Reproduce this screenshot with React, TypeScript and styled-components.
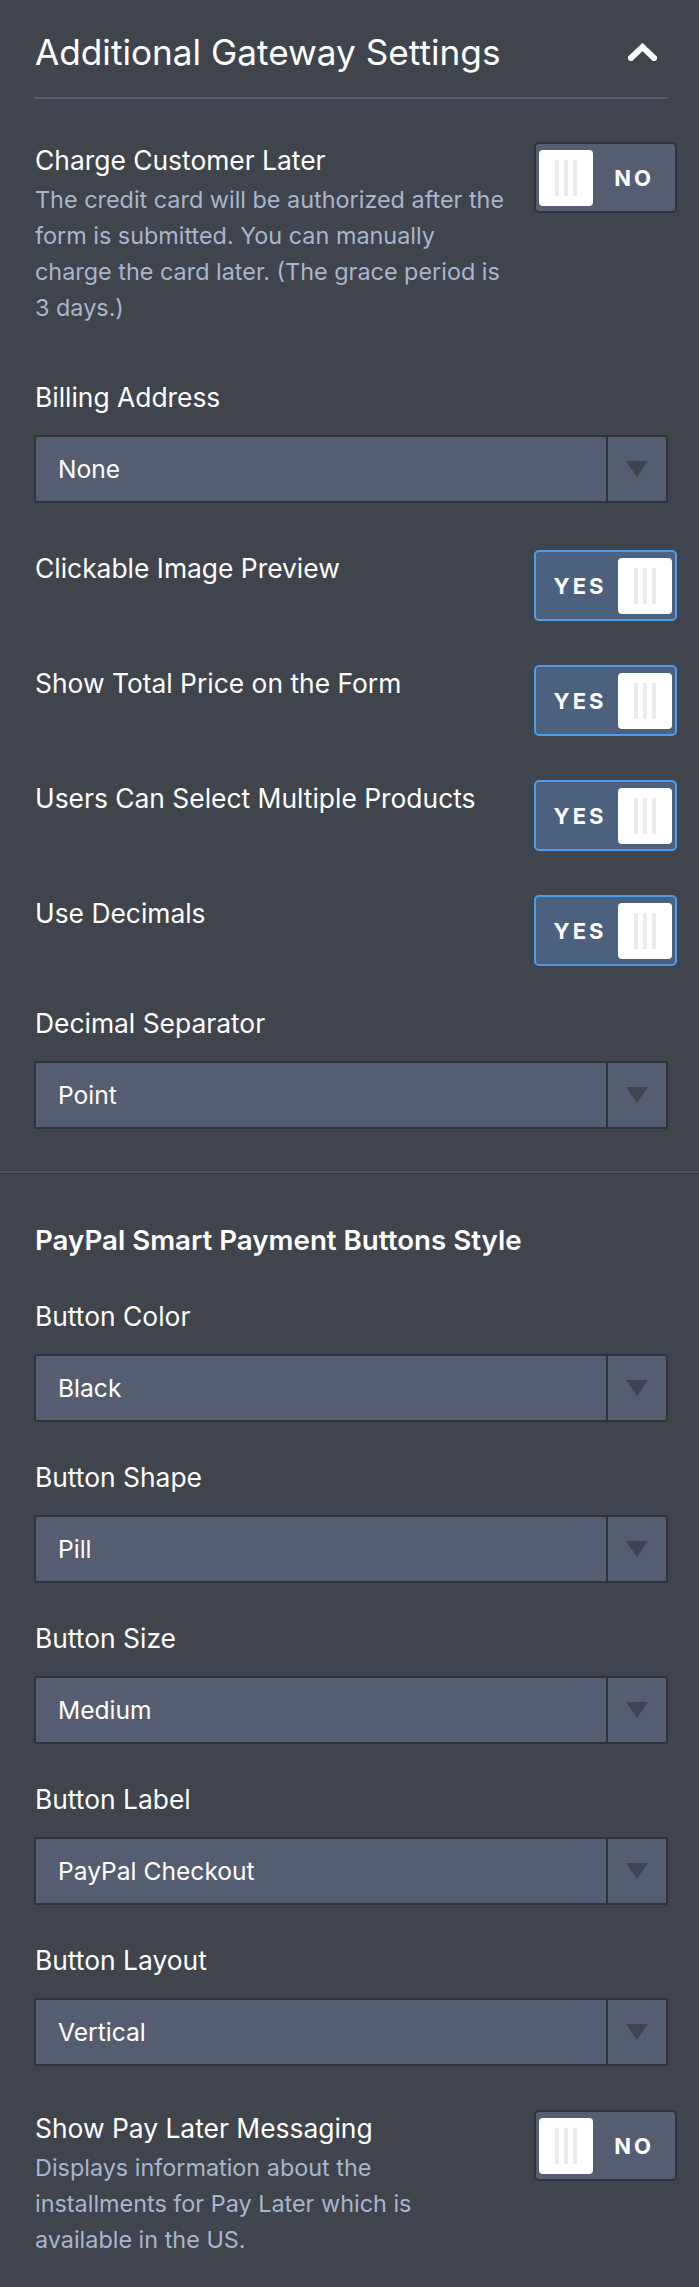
import React from 'react';
import styled, { createGlobalStyle, css } from 'styled-components';

type ToggleProps = {
  on: boolean;
};

type SelectProps = {
  value: string;
};

const GlobalStyle = createGlobalStyle`
  html,
  body {
    margin: 0;
    padding: 0;
    background-color: #3f444d;
  }

  body {
    font-family: Inter, 'Noto Sans', 'Liberation Sans', sans-serif;
    color: #fff;
    -webkit-font-smoothing: antialiased;
  }

  * {
    box-sizing: border-box;
  }
`;

function Toggle({ on }: ToggleProps) {
  const knob = (
    <Knob>
      <Grip />
      <Grip />
      <Grip />
    </Knob>
  );

  return (
    <ToggleBox $on={on}>
      {on ? null : knob}
      <ToggleText>{on ? 'YES' : 'NO'}</ToggleText>
      {on ? knob : null}
    </ToggleBox>
  );
}

function Select({ value }: SelectProps) {
  return (
    <SelectBox>
      <SelectValue>{value}</SelectValue>
      <ArrowCell>
        <Arrow />
      </ArrowCell>
    </SelectBox>
  );
}

function App() {
  return (
    <>
      <GlobalStyle />
      <Page>
        <Section>
          <Header>
            <Title>Additional Gateway Settings</Title>
            <Chevron width="29" height="18" viewBox="0 0 29 18">
              <polyline points="3,15 14.5,4 26,15" />
            </Chevron>
          </Header>

          <ToggleRow $gap={43}>
            <TextCol>
              <Label>Charge Customer Later</Label>
              <Description>
                The credit card will be authorized after the
                <br />
                form is submitted. You can manually
                <br />
                charge the card later. (The grace period is
                <br />
                3 days.)
              </Description>
            </TextCol>
            <Toggle on={false} />
          </ToggleRow>

          <Field $gap={53}>
            <Label>Billing Address</Label>
            <Select value="None" />
          </Field>

          <ToggleRow $gap={47}>
            <TextCol>
              <Label>Clickable Image Preview</Label>
            </TextCol>
            <Toggle on />
          </ToggleRow>

          <ToggleRow $gap={44}>
            <TextCol>
              <Label>Show Total Price on the Form</Label>
            </TextCol>
            <Toggle on />
          </ToggleRow>

          <ToggleRow $gap={44}>
            <TextCol>
              <Label>Users Can Select Multiple Products</Label>
            </TextCol>
            <Toggle on />
          </ToggleRow>

          <ToggleRow $gap={44}>
            <TextCol>
              <Label>Use Decimals</Label>
            </TextCol>
            <Toggle on />
          </ToggleRow>

          <Field $gap={39}>
            <Label>Decimal Separator</Label>
            <Select value="Point" />
          </Field>
        </Section>

        <Divider />

        <Section $bottom>
          <Heading>PayPal Smart Payment Buttons Style</Heading>

          <Field $gap={40}>
            <Label>Button Color</Label>
            <Select value="Black" />
          </Field>

          <Field $gap={37}>
            <Label>Button Shape</Label>
            <Select value="Pill" />
          </Field>

          <Field $gap={37}>
            <Label>Button Size</Label>
            <Select value="Medium" />
          </Field>

          <Field $gap={37}>
            <Label>Button Label</Label>
            <Select value="PayPal Checkout" />
          </Field>

          <Field $gap={37}>
            <Label>Button Layout</Label>
            <Select value="Vertical" />
          </Field>

          <ToggleRow $gap={44}>
            <TextCol>
              <Label>Show Pay Later Messaging</Label>
              <Description>
                Displays information about the
                <br />
                installments for Pay Later which is
                <br />
                available in the US.
              </Description>
            </TextCol>
            <Toggle on={false} />
          </ToggleRow>
        </Section>
      </Page>
    </>
  );
}

const Page = styled.div`
  display: flex;
  flex-direction: column;
  width: 100%;
  min-height: 2287px;
  background-color: #3f444d;
`;

const Section = styled.section<{ $bottom?: boolean }>`
  display: flex;
  flex-direction: column;
  padding: 0 31px 42px 34px;

  ${(p) =>
    p.$bottom &&
    css`
      padding-top: 48px;
      padding-bottom: 29px;
    `}
`;

const Header = styled.header`
  display: flex;
  justify-content: space-between;
  align-items: center;
  padding: 30px 0 23px 1px;
  border-bottom: 2px solid #555c6e;
`;

const Title = styled.h1`
  margin: 0;
  font-size: 35.2px;
  font-weight: 400;
  line-height: 44px;
  color: #fff;
`;

const Chevron = styled.svg`
  margin-right: 11px;
  fill: none;
  stroke: #fff;
  stroke-width: 6;
  stroke-linecap: square;
  stroke-linejoin: miter;
`;

const ToggleRow = styled.div<{ $gap: number }>`
  display: flex;
  justify-content: space-between;
  align-items: flex-start;
  gap: 20px;
  margin-top: ${(p) => p.$gap}px;
  margin-right: -9px;
`;

const TextCol = styled.div`
  display: flex;
  flex: 1;
  flex-direction: column;
  padding-left: 1px;
`;

const Label = styled.div`
  font-size: 26.4px;
  line-height: 36px;
  color: #fff;
  white-space: nowrap;
`;

const Description = styled.p`
  margin: 4px 0 0;
  font-size: 23.4px;
  line-height: 36px;
  color: #a9b5cb;
  white-space: nowrap;
`;

const ToggleBox = styled.div<{ $on: boolean }>`
  display: flex;
  flex-shrink: 0;
  align-items: center;
  width: 143px;
  height: 71px;
  padding: 0 3px;
  border: 2px solid #2e3239;
  border-radius: 5px;
  background-color: #555e71;

  ${(p) =>
    p.$on &&
    css`
      border-color: #4a9de6;
      background-color: #4c617e;
    `}
`;

const ToggleText = styled.span`
  flex: 1;
  padding-left: 3px;
  font-size: 22px;
  font-weight: 700;
  letter-spacing: 3px;
  text-align: center;
  color: #fff;
`;

const Knob = styled.div`
  display: flex;
  justify-content: center;
  align-items: center;
  gap: 5px;
  width: 54px;
  height: 56px;
  border-radius: 4px;
  background-color: #fff;
`;

const Grip = styled.span`
  width: 4px;
  height: 36px;
  background-color: #ebebeb;
`;

const Field = styled.div<{ $gap: number }>`
  display: flex;
  flex-direction: column;
  gap: 20px;
  margin-top: ${(p) => p.$gap}px;

  & > div:first-child {
    padding-left: 1px;
  }
`;

const SelectBox = styled.div`
  display: flex;
  height: 68px;
  border: 2px solid #2f333a;
  border-radius: 3px;
  background-color: #555e71;
`;

const SelectValue = styled.div`
  display: flex;
  flex: 1;
  align-items: center;
  padding-left: 22px;
  font-size: 24.6px;
  color: #fff;
`;

const ArrowCell = styled.div`
  display: flex;
  justify-content: center;
  align-items: center;
  width: 60px;
  border-left: 2px solid #2f333a;
`;

const Arrow = styled.span`
  width: 0;
  height: 0;
  border-left: 11px solid transparent;
  border-right: 11px solid transparent;
  border-top: 16px solid #3f4550;
`;

const Divider = styled.hr`
  width: 100%;
  height: 3px;
  margin: 0;
  border: none;
  border-top: 2px solid #4d5361;
  border-bottom: 1px solid #363a42;
`;

const Heading = styled.h2`
  margin: 0;
  padding-left: 1px;
  font-size: 27.7px;
  font-weight: 600;
  line-height: 36px;
  color: #fff;
`;

export default App;
